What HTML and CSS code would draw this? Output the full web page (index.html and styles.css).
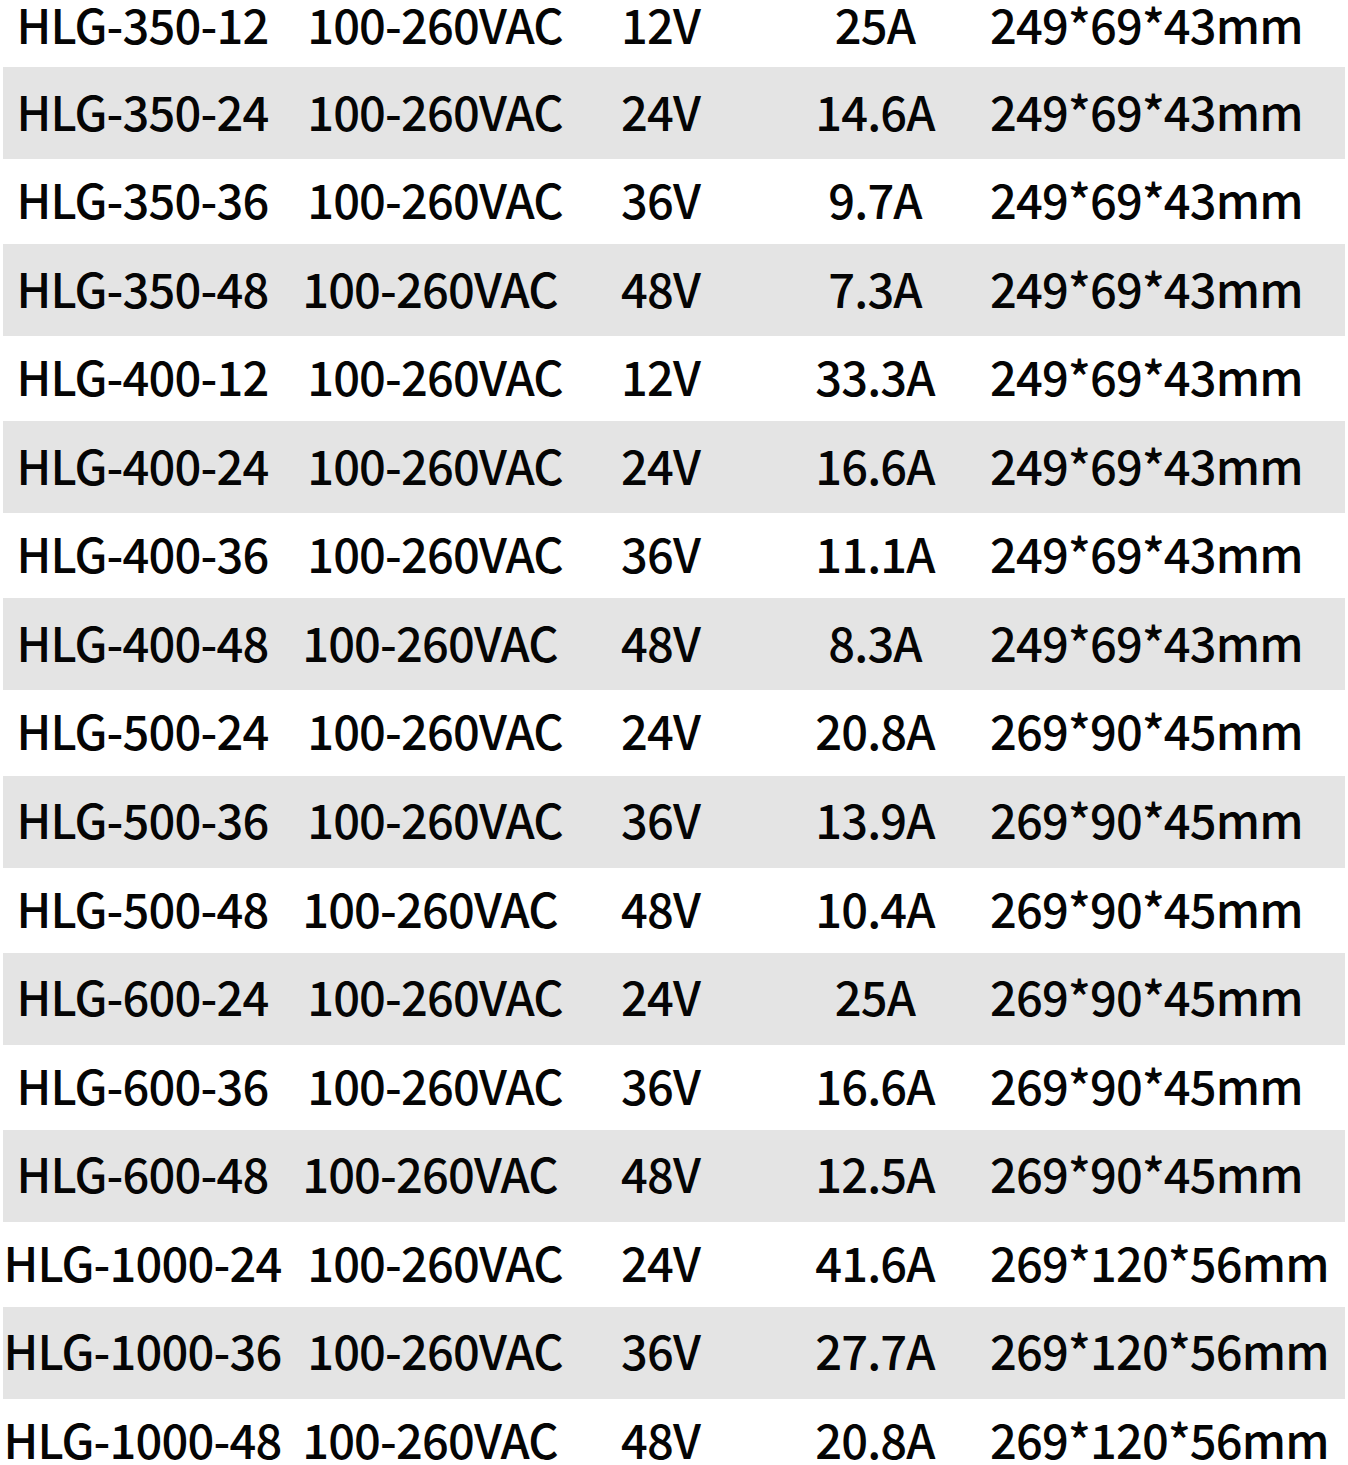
FILE: index.html
```html
<!DOCTYPE html>
<html>
<head>
<meta charset="utf-8">
<link rel="stylesheet" href="styles.css">
</head>
<body>
<div class="spec-table">
  <div class="row first"><span class="model">HLG-350-12</span><span class="input">100-260VAC</span><span class="volt">12V</span><span class="amp">25A</span><span class="size">249*69*43mm</span></div>
  <div class="row alt"><span class="model">HLG-350-24</span><span class="input">100-260VAC</span><span class="volt">24V</span><span class="amp">14.6A</span><span class="size">249*69*43mm</span></div>
  <div class="row"><span class="model">HLG-350-36</span><span class="input">100-260VAC</span><span class="volt">36V</span><span class="amp">9.7A</span><span class="size">249*69*43mm</span></div>
  <div class="row alt v48"><span class="model">HLG-350-48</span><span class="input">100-260VAC</span><span class="volt">48V</span><span class="amp">7.3A</span><span class="size">249*69*43mm</span></div>
  <div class="row"><span class="model">HLG-400-12</span><span class="input">100-260VAC</span><span class="volt">12V</span><span class="amp">33.3A</span><span class="size">249*69*43mm</span></div>
  <div class="row alt"><span class="model">HLG-400-24</span><span class="input">100-260VAC</span><span class="volt">24V</span><span class="amp">16.6A</span><span class="size">249*69*43mm</span></div>
  <div class="row"><span class="model">HLG-400-36</span><span class="input">100-260VAC</span><span class="volt">36V</span><span class="amp">11.1A</span><span class="size">249*69*43mm</span></div>
  <div class="row alt v48"><span class="model">HLG-400-48</span><span class="input">100-260VAC</span><span class="volt">48V</span><span class="amp">8.3A</span><span class="size">249*69*43mm</span></div>
  <div class="row"><span class="model">HLG-500-24</span><span class="input">100-260VAC</span><span class="volt">24V</span><span class="amp">20.8A</span><span class="size">269*90*45mm</span></div>
  <div class="row alt"><span class="model">HLG-500-36</span><span class="input">100-260VAC</span><span class="volt">36V</span><span class="amp">13.9A</span><span class="size">269*90*45mm</span></div>
  <div class="row v48"><span class="model">HLG-500-48</span><span class="input">100-260VAC</span><span class="volt">48V</span><span class="amp">10.4A</span><span class="size">269*90*45mm</span></div>
  <div class="row alt"><span class="model">HLG-600-24</span><span class="input">100-260VAC</span><span class="volt">24V</span><span class="amp">25A</span><span class="size">269*90*45mm</span></div>
  <div class="row"><span class="model">HLG-600-36</span><span class="input">100-260VAC</span><span class="volt">36V</span><span class="amp">16.6A</span><span class="size">269*90*45mm</span></div>
  <div class="row alt v48"><span class="model">HLG-600-48</span><span class="input">100-260VAC</span><span class="volt">48V</span><span class="amp">12.5A</span><span class="size">269*90*45mm</span></div>
  <div class="row"><span class="model">HLG-1000-24</span><span class="input">100-260VAC</span><span class="volt">24V</span><span class="amp">41.6A</span><span class="size">269*120*56mm</span></div>
  <div class="row alt"><span class="model">HLG-1000-36</span><span class="input">100-260VAC</span><span class="volt">36V</span><span class="amp">27.7A</span><span class="size">269*120*56mm</span></div>
  <div class="row v48"><span class="model">HLG-1000-48</span><span class="input">100-260VAC</span><span class="volt">48V</span><span class="amp">20.8A</span><span class="size">269*120*56mm</span></div>
</div>
</body>
</html>
```
FILE: styles.css
```css
html, body {
  margin: 0;
  padding: 0;
  background: #ffffff;
}
body {
  font-family: "Noto Sans CJK SC", "Liberation Sans", sans-serif;
  font-size: 47px;
  font-weight: 500;
  letter-spacing: -0.8px;
  color: #050505;
  overflow: hidden;
}
.spec-table {
  display: flex;
  flex-direction: column;
  padding: 0 3px;
}
.row {
  box-sizing: border-box;
  display: grid;
  grid-template-columns: 279px 306px 172px 230px 1fr;
  align-items: center;
  height: 85.15px;
  padding-bottom: 6px;
  white-space: nowrap;
  line-height: 1;
}
.row.first {
  height: 67px;
  padding-bottom: 22px;
}
.row.alt {
  background: #e4e4e4;
  height: 92px;
}
.model { text-align: center; }
.input { text-align: center; }
.row.v48 .input { padding-right: 10px; }
.volt { padding-left: 33px; }
.amp { text-align: center; }
.size { padding-left: 0; }
```
